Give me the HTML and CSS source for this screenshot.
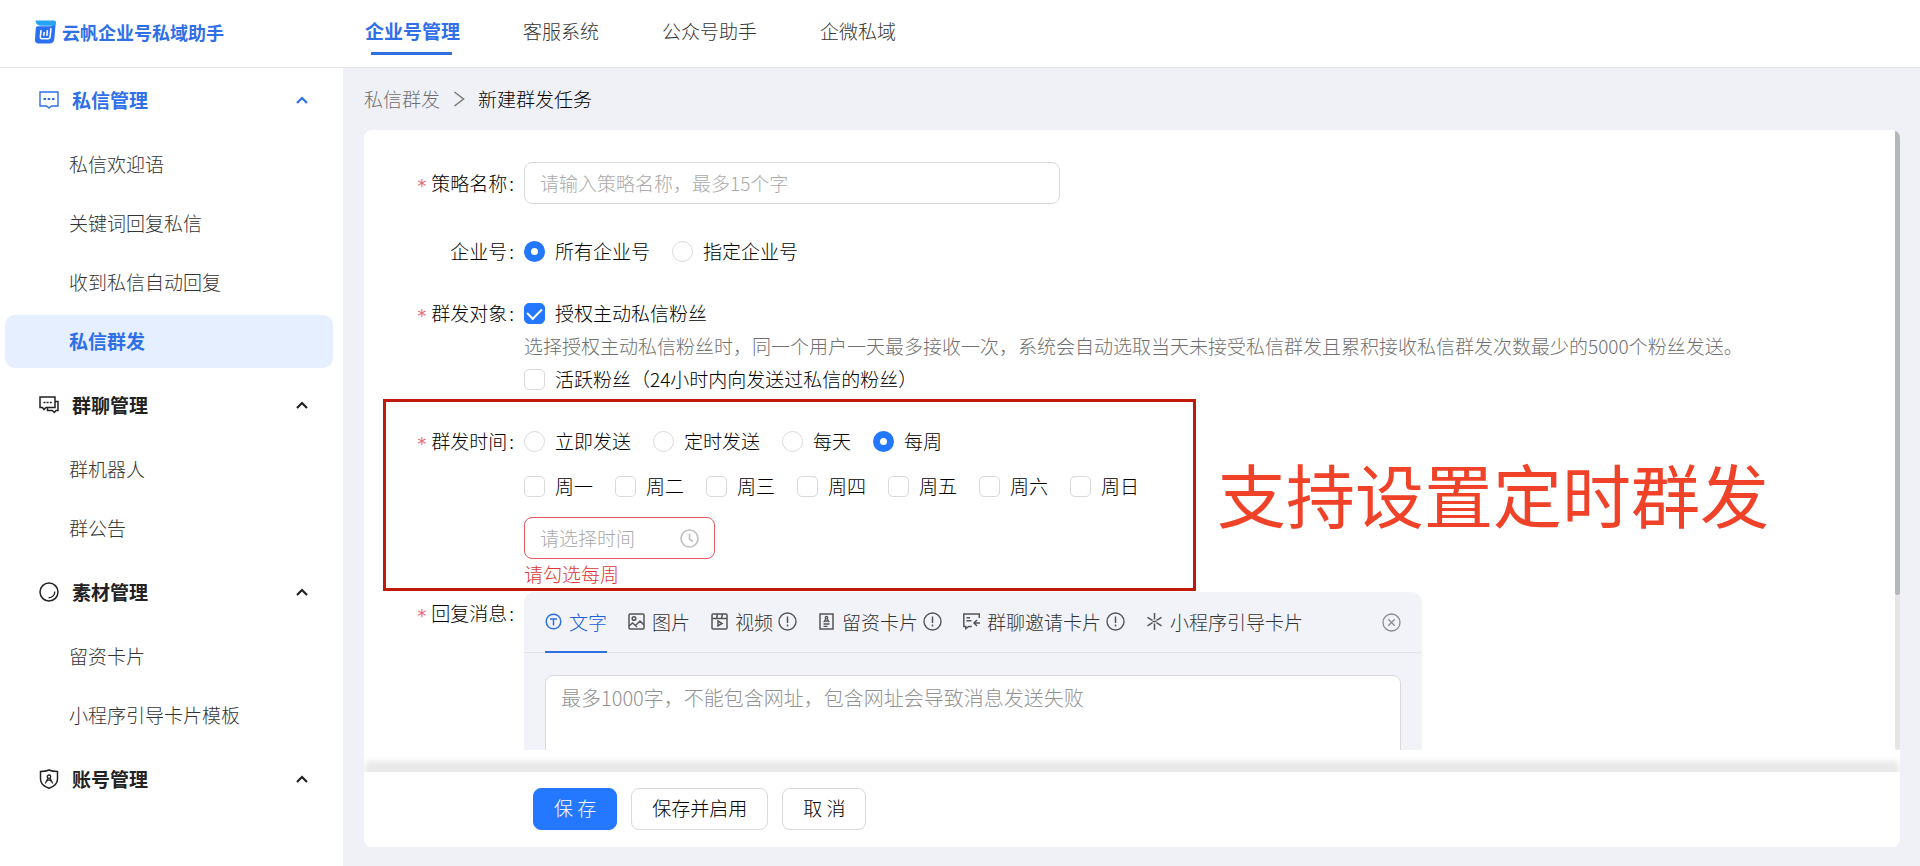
FILE: index.html
```html
<!DOCTYPE html>
<html lang="zh-CN">
<head>
<meta charset="utf-8">
<meta name="viewport" content="width=device-width, initial-scale=1">
<title>云帆企业号私域助手</title>
<link rel="stylesheet" href="styles.css">
</head>
<body>
<svg class="sprite" aria-hidden="true">
  <symbol id="chevron" viewBox="0 0 12 12"><path d="M1 9l5-5 5 5" fill="none" stroke="currentColor" stroke-width="2.2"/></symbol>
  <symbol id="info" viewBox="0 0 19 19"><circle cx="9.500" cy="9.500" r="8.500" fill="none" stroke="currentColor" stroke-width="1.400"/><path d="M9.500 4.500v6.500M9.500 12.500v2" stroke="currentColor" stroke-width="1.500"/></symbol>
</svg>

<header class="topbar">
  <a class="brand" href="#">
    <svg class="brand__logo" viewBox="0 0 22 24" aria-hidden="true">
      <path d="M2.500 6H17l4.800-5L20.300 19Q19.800 24 15 24H4Q-.3 24 0 19.500L.8 8Q1 6 2.500 6z" fill="#2b6ff2"/>
      <path d="M.6 0h19.400Q22.200 0 22 2.500Q21.500 5.500 18.500 5.500H6Q1 5 .6 0z" fill="#25a3f5"/>
      <path d="M6.300 10L5.600 17Q5.500 19 7.300 19H13.500Q15.600 19 15.800 17L16.700 8M9.600 12L9.200 16M13 10L12.400 16" fill="none" stroke="#fff" stroke-width="1.600"/>
    </svg>
    <span>云帆企业号私域助手</span>
  </a>
  <nav class="topnav">
    <a class="topnav__link topnav__link--active" href="#">企业号管理</a>
    <a class="topnav__link" href="#">客服系统</a>
    <a class="topnav__link" href="#">公众号助手</a>
    <a class="topnav__link" href="#">企微私域</a>
  </nav>
</header>

<div class="layout">
  <aside class="sidebar">
    <section class="group">
      <button class="group__head group__head--active" type="button">
        <svg class="group__icon" viewBox="0 0 20 20" fill="none" stroke="currentColor" stroke-width="1.400"><path d="M1 2h18v14h-6.500L10 18l-2.500-2H1z"/><path d="M4.500 9h2.500M8.700 9h2.500M13 9h2.500" stroke-width="1.800"/></svg>
        <span>私信管理</span>
        <svg class="group__chevron"><use href="#chevron"/></svg>
      </button>
      <ul class="group__list">
        <li><a class="item" href="#">私信欢迎语</a></li>
        <li><a class="item" href="#">关键词回复私信</a></li>
        <li><a class="item" href="#">收到私信自动回复</a></li>
        <li><a class="item item--active" href="#">私信群发</a></li>
      </ul>
    </section>
    <section class="group">
      <button class="group__head" type="button">
        <svg class="group__icon" viewBox="0 0 20 20" fill="none" stroke="currentColor" stroke-width="1.500"><path d="M1 2h15v10.500H7L5 14.500l-1.500-2H1z"/><path d="M16 6.500h3v9h-2l-1.700 2-2-2H8.500v-3"/><path d="M4.500 7.500h2M7.600 7.500h2M10.800 7.500h2" stroke-width="1.600"/></svg>
        <span>群聊管理</span>
        <svg class="group__chevron"><use href="#chevron"/></svg>
      </button>
      <ul class="group__list">
        <li><a class="item" href="#">群机器人</a></li>
        <li><a class="item" href="#">群公告</a></li>
      </ul>
    </section>
    <section class="group">
      <button class="group__head" type="button">
        <svg class="group__icon" viewBox="0 0 20 20" fill="none" stroke="currentColor" stroke-width="1.500"><circle cx="10" cy="10" r="9"/><path d="M15.800 9.500c0 3.500-2.500 6-6.300 6.300" stroke-width="1.300"/></svg>
        <span>素材管理</span>
        <svg class="group__chevron"><use href="#chevron"/></svg>
      </button>
      <ul class="group__list">
        <li><a class="item" href="#">留资卡片</a></li>
        <li><a class="item" href="#">小程序引导卡片模板</a></li>
      </ul>
    </section>
    <section class="group">
      <button class="group__head" type="button">
        <svg class="group__icon" viewBox="0 0 20 20" fill="none" stroke="currentColor" stroke-width="1.500"><path d="M10 1c2.500 1.200 5.500 1.500 8.500 1.500V10c0 4.500-3.500 7.500-8.500 9.300C5 17.500 1.500 14.500 1.500 10V2.500C4.500 2.500 7.500 2.200 10 1z"/><circle cx="10" cy="7.700" r="1.700" stroke-width="1.300"/><path d="M6.300 14.500L8.800 9.200M13.700 14.500L11.200 9.200M8 12l2-1.200 2 1.200" stroke-width="1.200"/></svg>
        <span>账号管理</span>
        <svg class="group__chevron"><use href="#chevron"/></svg>
      </button>
    </section>
  </aside>

  <main class="main">
    <nav class="crumbs" aria-label="breadcrumb">
      <a class="crumbs__link" href="#">私信群发</a>
      <svg class="crumbs__sep" viewBox="0 0 12 16" aria-hidden="true"><path d="M1.500 1l9 7-9 7" fill="none" stroke="currentColor" stroke-width="1.500"/></svg>
      <span>新建群发任务</span>
    </nav>

    <form class="card">
      <div class="viewport">
        <div class="fields">
          <div class="row row--name">
            <label class="row__label row__label--required" for="name">策略名称</label>
            <input class="input input--name" id="name" type="text" placeholder="请输入策略名称，最多15个字">
          </div>

          <div class="row">
            <span class="row__label" id="l-account">企业号</span>
            <div class="choices" role="radiogroup" aria-labelledby="l-account">
              <label class="choice"><input class="mark mark--radio" type="radio" name="account" checked>所有企业号</label>
              <label class="choice"><input class="mark mark--radio" type="radio" name="account">指定企业号</label>
            </div>
          </div>

          <div class="row">
            <span class="row__label row__label--required" id="l-target">群发对象</span>
            <div class="stack" role="group" aria-labelledby="l-target">
              <label class="choice"><input class="mark mark--check" type="checkbox" checked>授权主动私信粉丝</label>
              <p class="hint">选择授权主动私信粉丝时，同一个用户一天最多接收一次，系统会自动选取当天未接受私信群发且累积接收私信群发次数最少的5000个粉丝发送。</p>
              <label class="choice"><input class="mark mark--check" type="checkbox">活跃粉丝（24小时内向发送过私信的粉丝）</label>
            </div>
          </div>

          <div class="row row--schedule">
            <span class="row__label row__label--required" id="l-time">群发时间</span>
            <div class="stack stack--loose" role="group" aria-labelledby="l-time">
              <div class="choices">
                <label class="choice"><input class="mark mark--radio" type="radio" name="when">立即发送</label>
                <label class="choice"><input class="mark mark--radio" type="radio" name="when">定时发送</label>
                <label class="choice"><input class="mark mark--radio" type="radio" name="when">每天</label>
                <label class="choice"><input class="mark mark--radio" type="radio" name="when" checked>每周</label>
              </div>
              <div class="choices">
                <label class="choice"><input class="mark mark--check" type="checkbox">周一</label>
                <label class="choice"><input class="mark mark--check" type="checkbox">周二</label>
                <label class="choice"><input class="mark mark--check" type="checkbox">周三</label>
                <label class="choice"><input class="mark mark--check" type="checkbox">周四</label>
                <label class="choice"><input class="mark mark--check" type="checkbox">周五</label>
                <label class="choice"><input class="mark mark--check" type="checkbox">周六</label>
                <label class="choice"><input class="mark mark--check" type="checkbox">周日</label>
              </div>
              <div>
                <div class="timebox">
                  <input class="timebox__input" type="text" placeholder="请选择时间" aria-label="时间">
                  <svg class="timebox__icon" viewBox="0 0 19 19" fill="none" stroke="currentColor" stroke-width="1.600" aria-hidden="true"><circle cx="9.500" cy="9.500" r="8.500"/><path d="M9.500 4.500v5.500l3.500 2.500"/></svg>
                </div>
                <p class="error">请勾选每周</p>
              </div>
            </div>
            <div class="callout" aria-hidden="true"></div>
            <p class="callout-text">支持设置定时群发</p>
          </div>

          <div class="row row--reply">
            <label class="row__label row__label--required" for="reply">回复消息</label>
            <div class="reply">
              <div class="reply__bar">
                <div class="tabs" role="tablist">
                  <button class="tab tab--active" type="button" role="tab">
                    <svg class="tab__icon" viewBox="0 0 17 17" fill="none" stroke="currentColor" stroke-width="1.500"><circle cx="8.500" cy="8.500" r="7.300"/><path d="M5 6h7M8.500 6v6.500"/></svg>文字
                  </button>
                  <button class="tab" type="button" role="tab">
                    <svg class="tab__icon" viewBox="0 0 17 17" fill="none" stroke="currentColor" stroke-width="1.500"><rect x="1" y="1" width="15" height="15" rx="1"/><circle cx="6" cy="5.500" r="1.800"/><path d="M1 13l3.500-3 3 2.500L12 8l4 4M7.500 12.500L9 14"/></svg>图片
                  </button>
                  <button class="tab" type="button" role="tab">
                    <svg class="tab__icon" viewBox="0 0 17 17" fill="none" stroke="currentColor" stroke-width="1.500"><rect x="1" y="1" width="15" height="15" rx="1"/><path d="M1 5.500h15M6.500 1L5.500 5.500M11.500 1l-1 4.500"/><path d="M7 8l4 2.500L7 13z"/></svg>视频
                    <svg class="tab__info"><use href="#info"/></svg>
                  </button>
                  <button class="tab" type="button" role="tab">
                    <svg class="tab__icon" viewBox="0 0 17 17" fill="none" stroke="currentColor" stroke-width="1.500"><rect x="2" y="1" width="13" height="15"/><g stroke-width="1.300"><circle cx="8.500" cy="4.700" r="1.200"/><path d="M5.800 9.300l1.700-3M11.200 9.300l-1.700-3M7 8h3M5.500 11h6M5.500 13.300h4"/></g></svg>留资卡片
                    <svg class="tab__info"><use href="#info"/></svg>
                  </button>
                  <button class="tab" type="button" role="tab">
                    <svg class="tab__icon" viewBox="0 0 17 17" fill="none" stroke="currentColor" stroke-width="1.500"><path d="M16.300 5V1H.8v12.500h2V15.500l3-2h3M3.500 4.700h3.500M3.500 7.700h5"/><path d="M17 10h-5.500M14 7l-3 3 3 3"/></svg>群聊邀请卡片
                    <svg class="tab__info"><use href="#info"/></svg>
                  </button>
                  <button class="tab" type="button" role="tab">
                    <svg class="tab__icon" viewBox="0 0 17 17" fill="none" stroke="currentColor" stroke-width="1.500"><path d="M8.500 0v6.500M8.500 10.500V17M1.500 4.300l5 3M10.500 9.700l5 3.200M15.500 4.300l-5 3M6.500 9.700l-5 3.200M6.500 8.500h4"/></svg>小程序引导卡片
                  </button>
                </div>
                <button class="reply__close" type="button" aria-label="关闭">
                  <svg class="tab__info" viewBox="0 0 19 19" fill="none" stroke="currentColor" stroke-width="1.300"><circle cx="9.500" cy="9.500" r="8.500"/><path d="M6.300 6.300l6.400 6.400M12.700 6.300l-6.400 6.400"/></svg>
                </button>
              </div>
              <div class="reply__body">
                <textarea class="reply__text" id="reply" placeholder="最多1000字，不能包含网址，包含网址会导致消息发送失败"></textarea>
              </div>
            </div>
          </div>
        </div>
        <div class="track" aria-hidden="true"><div class="track__thumb"></div></div>
      </div>

      <footer class="actions">
        <button class="btn btn--primary" type="button">保 存</button>
        <button class="btn" type="button">保存并启用</button>
        <button class="btn" type="button">取 消</button>
      </footer>
    </form>
  </main>
</div>
</body>
</html>
```

FILE: styles.css
```css
* {
  box-sizing: border-box;
}

body {
  margin: 0;
  height: 100vh;
  display: flex;
  flex-direction: column;
  overflow: hidden;
  font-family: "Noto Sans CJK SC", sans-serif;
  font-size: 19px;
  font-weight: 300;
  line-height: 28px;
  color: #000;
  background: #fff;
}

button,
input,
textarea {
  font: inherit;
  color: inherit;
}

button {
  border: 0;
  padding: 0;
  background: none;
  cursor: pointer;
}

a {
  color: inherit;
  text-decoration: none;
}

p,
ul {
  margin: 0;
  padding: 0;
  list-style: none;
}

.sprite {
  display: none;
}

/* Top bar */
.topbar {
  display: flex;
  flex: none;
  height: 68px;
  border-bottom: 1px solid #e2e3e5;
}

.brand {
  display: flex;
  align-items: center;
  gap: 6px;
  width: 365px;
  padding: 0 0 4px 35px;
  font-size: 18px;
  font-weight: 700;
  color: #2f6fe8;
}

.brand__logo {
  flex: none;
  width: 21px;
  height: 24px;
}

.topnav {
  display: flex;
  gap: 63px;
}

.topnav__link {
  position: relative;
  padding-top: 17px;
  color: #333;
}

.topnav__link--active {
  font-weight: 700;
  color: #2f6fe8;
}

.topnav__link--active::after {
  content: "";
  position: absolute;
  left: 6px;
  right: 8px;
  top: 52px;
  height: 3px;
  background: #2f6fe0;
}

/* Sidebar */
.layout {
  display: flex;
  flex: 1;
  min-height: 0;
}

.sidebar {
  flex: none;
  width: 343px;
}

.group__head {
  display: flex;
  align-items: center;
  width: 100%;
  height: 64px;
  padding: 0 35px 0 39px;
  gap: 13px;
  font-weight: 700;
  color: #222;
}

.group__head--active {
  color: #2f6fe8;
}

.group__icon {
  width: 20px;
  height: 20px;
}

.group__chevron {
  width: 12px;
  height: 12px;
  margin-left: auto;
}

.group__list {
  padding-bottom: 5px;
}

.item {
  display: block;
  margin: 6px 10px 0 5px;
  padding: 12px 0 13px 64px;
  border-radius: 10px;
  color: #333;
}

.item--active {
  font-weight: 700;
  color: #2f6fe8;
  background: #e5efff;
}

/* Main column */
.main {
  display: flex;
  flex: 1;
  flex-direction: column;
  min-width: 0;
  padding: 0 20px 19px 21px;
  background: #f0f1f6;
}

.crumbs {
  display: flex;
  align-items: center;
  gap: 13px;
  height: 62px;
  padding-bottom: 1px;
}

.crumbs__link {
  color: #707070;
}

.crumbs__sep {
  width: 12px;
  height: 16px;
  color: #777;
}

.card {
  display: flex;
  flex: 1;
  flex-direction: column;
  min-height: 0;
  border-radius: 8px;
  overflow: hidden;
  background: #fff;
}

.viewport {
  display: flex;
  flex: 1;
  min-height: 0;
  margin-bottom: 22px;
}

.fields {
  flex: 1;
  min-width: 0;
  padding-top: 32px;
  overflow-y: auto;
  scrollbar-width: none;
}

.track {
  flex: none;
  width: 5px;
  border-radius: 3px;
  background: #e5e5e5;
}

.track__thumb {
  height: 75%;
  border-radius: 3px;
  background: #b5b8b8;
}

/* Form rows */
.row {
  position: relative;
  display: flex;
  margin-bottom: 34px;
}

.row--name {
  align-items: center;
  margin-bottom: 33px;
}

.row--schedule {
  margin-bottom: 4px;
}

.row__label {
  flex: none;
  width: 160px;
  padding-right: 10px;
  text-align: right;
}

.row__label::after {
  content: ":";
  margin-left: 2px;
}

.row__label--required::before {
  content: "*";
  margin-right: 4px;
  font-family: "DejaVu Sans Mono", monospace;
  font-size: 18px;
  font-weight: 400;
  line-height: 1;
  vertical-align: -1px;
  color: #e8686c;
}

.input {
  height: 42px;
  padding: 0 15px 2px;
  border: 1px solid #d9d9d9;
  border-radius: 8px;
  background: #fff;
}

.input--name {
  width: 536px;
}

::placeholder {
  color: #aaa;
  opacity: 1;
}

.choices {
  display: flex;
  gap: 22px;
}

.choice {
  display: flex;
  align-items: center;
  gap: 10px;
}

.mark {
  appearance: none;
  flex: none;
  width: 21px;
  height: 21px;
  margin: 0;
  border: 1px solid #d9d9d9;
  background: #fff;
}

.mark--radio {
  border-radius: 50%;
}

.mark--radio:checked {
  border: 7px solid #2477ff;
}

.mark--check {
  border-radius: 5px;
}

.mark--check:checked {
  display: grid;
  place-items: center;
  border-color: #2477ff;
  background: #2477ff;
}

.mark--check:checked::before {
  content: "";
  width: 7px;
  height: 12px;
  margin-bottom: 3px;
  border: solid #fff;
  border-width: 0 2px 2px 0;
  transform: rotate(45deg);
}

.stack {
  display: flex;
  flex-direction: column;
  gap: 5px;
}

.stack--loose {
  gap: 17px;
}

.hint {
  color: #707070;
}

.timebox {
  display: flex;
  align-items: center;
  width: 191px;
  height: 42px;
  padding: 0 15px;
  border: 1px solid #e05a5e;
  border-radius: 8px;
}

.timebox__input {
  flex: 1;
  min-width: 0;
  padding: 0;
  border: 0;
  background: none;
}

.timebox__icon {
  flex: none;
  width: 19px;
  height: 19px;
  color: #bfbfbf;
}

.error {
  padding-top: 1px;
  color: #dc3434;
}

/* Annotation drawn over the schedule row */
.callout {
  position: absolute;
  top: -28px;
  bottom: -3px;
  left: 19px;
  width: 813px;
  border: 3px solid #bf1a0a;
  pointer-events: none;
}

.callout-text {
  position: absolute;
  top: 16px;
  left: 853px;
  font-size: 69px;
  font-weight: 400;
  line-height: 100px;
  white-space: nowrap;
  color: #f04228;
}

/* Reply editor */
.row--reply .row__label {
  padding-top: 7px;
}

.reply {
  width: 898px;
  border-radius: 10px;
  background: #f2f3f8;
}

.reply__bar {
  display: flex;
  justify-content: space-between;
  height: 61px;
  padding: 0 21px;
  border-bottom: 1px solid #e2e4e8;
}

.tabs {
  display: flex;
  gap: 21px;
}

.tab {
  display: flex;
  align-items: center;
  gap: 7px;
  height: 61px;
  border-bottom: 2px solid transparent;
  color: #333;
  white-space: nowrap;
}

.tab svg {
  color: #555;
}

.tab--active {
  border-color: #2f6fe0;
  color: #2060dc;
}

.tab--active svg {
  color: #2f6fe0;
}

.tab__icon {
  width: 17px;
  height: 17px;
}

.tab__info {
  display: block;
  width: 19px;
  height: 19px;
}

.tab .tab__info {
  margin-left: -2px;
}

.reply__close {
  color: #8c8c8c;
}

.reply__body {
  padding: 22px 21px;
}

.reply__text {
  display: block;
  width: 100%;
  height: 150px;
  padding: 8px 15px;
  border: 1px solid #d9d9d9;
  border-radius: 8px;
  font-size: 20px;
  background: #fff;
  resize: none;
}

.reply__text::placeholder {
  color: #929292;
}

/* Footer */
.actions {
  display: flex;
  flex: none;
  gap: 14px;
  padding: 16px 0 17px 169px;
  background: #fff;
  box-shadow: 0 -12px 6px -1px #e9e9e9;
}

.btn {
  height: 42px;
  padding: 0 20px 2px;
  border: 1px solid #d9d9d9;
  border-radius: 8px;
  background: #fff;
}

.btn--primary {
  border-color: #2477ff;
  color: #fff;
  background: #2477ff;
}
```
